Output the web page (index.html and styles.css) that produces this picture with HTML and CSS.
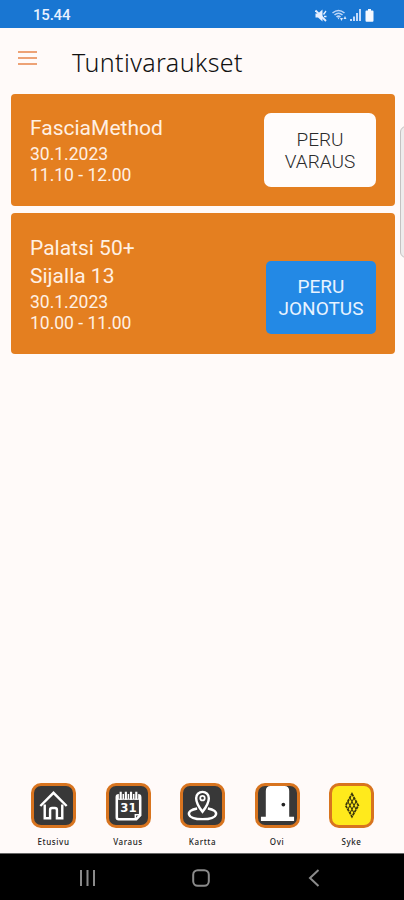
FILE: index.html
```html
<!DOCTYPE html>
<html lang="fi">
<head>
  <meta charset="UTF-8">
  <meta name="viewport" content="width=device-width, initial-scale=1">
  <title>Tuntivaraukset</title>
  <link rel="stylesheet" href="styles.css">
</head>
<body>
  <div class="status-bar">
    <span class="clock">15.44</span>
    <div class="status-icons">
      <svg width="12" height="13" viewBox="0 0 12 13">
        <path d="M.5 4.500H3L7.500.500v12L3 8.500H.5z" fill="#e6efff"/>
        <path d="M8.500 5.500L11 2M9 7.500h2.500" stroke="#e6efff" stroke-width="1.300"/>
        <path d="M.5 1.500l10.500 10.500" stroke="#e6efff" stroke-width="1.800"/>
      </svg>
      <svg class="wifi" width="15" height="12" viewBox="0 0 15 12">
        <g fill="none" stroke="#bcd6f8" stroke-width="1.600">
          <path d="M.5 4Q6.500-1 12.500 4"/>
          <path d="M2.500 6Q6.500 2.500 10.500 6"/>
          <path d="M4.500 8Q6.500 6.200 8.500 8"/>
        </g>
        <path d="M5.500 8.500h2L6.500 10.500zM8 9h3l-1.500 3zM11.500 10L13 7l1.500 3z" fill="#d5e5fb"/>
      </svg>
      <svg class="signal" width="12" height="12" viewBox="0 0 12 12" fill="#c3dafa">
        <path d="M0 10h2v2H0zM3 7.500h2V12H3zM6 4h2v8H6zM9 0h2v12H9z"/>
      </svg>
      <svg class="battery" width="9" height="13" viewBox="0 0 9 13">
        <path d="M3 0h3v1.500h1.500Q8.500 1.500 8.500 2.500v9Q8.500 12.700 7.500 12.700h-6Q.5 12.700.5 11.500v-9Q.5 1.500 1.500 1.500H3z" fill="#f4f8ff"/>
      </svg>
    </div>
  </div>

  <header class="header">
    <button class="menu-button" aria-label="Valikko">
      <span></span>
      <span></span>
      <span></span>
    </button>
    <h1>Tuntivaraukset</h1>
  </header>

  <main class="bookings">
    <div class="card">
      <div class="info">
        <h2>FasciaMethod</h2>
        <p>30.1.2023</p>
        <p>11.10 - 12.00</p>
      </div>
      <button class="cancel-button">PERU<br>VARAUS</button>
    </div>
    <div class="card card-queue">
      <div class="info">
        <h2>Palatsi 50+</h2>
        <h2>Sijalla 13</h2>
        <p>30.1.2023</p>
        <p>10.00 - 11.00</p>
      </div>
      <button class="cancel-button queue-button">PERU<br>JONOTUS</button>
    </div>
  </main>

  <nav class="tabs">
    <a class="tab">
      <span class="tab-icon">
        <svg viewBox="0 0 40 40" fill="none" stroke="#fff" stroke-width="2.500">
          <path d="M6.500 20.500L20 7l13.500 13.500"/>
          <path d="M11 19v14h5.500v-8.500q0-2 2-2h3q2 0 2 2V33H29V19"/>
        </svg>
      </span>
      <span class="tab-label">Etusivu</span>
    </a>
    <a class="tab">
      <span class="tab-icon">
        <svg viewBox="0 0 40 40">
          <path d="M10 9.500h20q2 0 2 2V30l-4 4H10q-2 0-2-2V11.500q0-2 2-2z" fill="none" stroke="#fff" stroke-width="2.600"/>
          <path d="M27 34v-4.500h5" fill="none" stroke="#fff" stroke-width="1.500"/>
          <path d="M8 9.500h24v4.500H8z" fill="#fff"/>
          <path d="M12 6v7M17.300 6v7M22.600 6v7M28 6v7" stroke="#383838" stroke-width="3.800"/>
          <path d="M12 6v8M17.300 6v8M22.600 6v8M28 6v8" stroke="#fff" stroke-width="2.200"/>
          <text class="calendar-day" x="20" y="27" text-anchor="middle">31</text>
        </svg>
      </span>
      <span class="tab-label">Varaus</span>
    </a>
    <a class="tab">
      <span class="tab-icon">
        <svg viewBox="0 0 40 40" fill="none" stroke="#fff" stroke-width="2.500">
          <path d="M20 26.500Q13.500 18 13.500 12.500a6.500 6.500 0 0 1 13 0Q26.500 18 20 26.500z"/>
          <circle cx="20" cy="12.500" r="2.300" stroke-width="1.800"/>
          <path d="M14.500 23C2 25 3 34 20 34s18-9 5.500-11"/>
        </svg>
      </span>
      <span class="tab-label">Kartta</span>
    </a>
    <a class="tab">
      <span class="tab-icon">
        <svg viewBox="0 0 40 40">
          <path d="M8 31.500V5q0-5 5-5h14q5 0 5 5v26.500h5V36H3v-4.500z" fill="#fff"/>
          <circle cx="26" cy="19" r="1.900" fill="#222"/>
        </svg>
      </span>
      <span class="tab-label">Ovi</span>
    </a>
    <a class="tab">
      <span class="tab-icon tab-icon-yellow">
        <svg viewBox="0 0 40 40" fill="none" stroke="#3c380b">
          <path d="M20.500 8L27 20l-6.500 11.500L14 20z" stroke-width="1.800" stroke-dasharray="3 .7"/>
          <path d="M18.300 12l6.500 12M16.200 16l6.500 12M22.700 12l-6.500 12M24.800 16l-6.500 12" stroke-width="1.100"/>
        </svg>
      </span>
      <span class="tab-label">Syke</span>
    </a>
  </nav>

  <div class="system-nav">
    <svg width="18" height="18" viewBox="0 0 18 18" stroke="#8b8b8b" stroke-width="2">
      <path d="M2 1v16M8.500 1v16M15 1v16"/>
    </svg>
    <svg width="18" height="18" viewBox="0 0 18 18" fill="none" stroke="#8b8b8b" stroke-width="2">
      <rect x="1.200" y="1.200" width="15.600" height="15.600" rx="4.500"/>
    </svg>
    <svg width="18" height="18" viewBox="0 0 18 18" fill="none" stroke="#8b8b8b" stroke-width="2">
      <path d="M13.500 1L5 9l8.500 8"/>
    </svg>
  </div>

  <div class="edge-handle"></div>
</body>
</html>
```
FILE: styles.css
```css
* {
  box-sizing: border-box;
}

body {
  position: relative;
  display: flex;
  flex-direction: column;
  height: 900px;
  margin: 0;
  overflow: hidden;
  font-family: Roboto, sans-serif;
  background: #fffaf9;
}

h1, h2, p {
  margin: 0;
  font-weight: 400;
}

button {
  border: none;
  font-family: inherit;
  cursor: pointer;
}

.status-bar {
  display: flex;
  align-items: center;
  justify-content: space-between;
  height: 28px;
  padding: 2px 30px 0 33px;
  background: #1976d2;
}

.clock {
  color: #e8f1ff;
  font-size: 15px;
  font-weight: 500;
  letter-spacing: -0.2px;
}

.status-icons {
  display: flex;
  align-items: center;
}

.wifi {
  margin-left: 5px;
}

.signal {
  margin-left: 3px;
}

.battery {
  margin-left: 3px;
}

.header {
  display: flex;
  align-items: center;
  height: 66px;
  padding: 2px 18px 0;
}

.menu-button {
  display: flex;
  flex-direction: column;
  gap: 4px;
  width: 19px;
  margin: -8px 35px 0 0;
  padding: 0;
  background: none;
}

.menu-button span {
  height: 2px;
  background: #eda276;
}

.header h1 {
  color: #111;
  font-family: "Noto Sans", sans-serif;
  font-size: 25px;
  font-weight: 300;
  line-height: 34px;
  letter-spacing: 0.4px;
}

.bookings {
  flex: 1;
  display: flex;
  flex-direction: column;
  gap: 7px;
  padding: 0 9px 0 11px;
}

.card {
  display: flex;
  align-items: center;
  justify-content: space-between;
  height: 112px;
  padding: 0 19px;
  border-radius: 4px;
  background: #e47f20;
}

.card-queue {
  align-items: flex-end;
  height: 141px;
  padding-bottom: 20px;
}

.info {
  color: #fff0e3;
}

.info h2 {
  font-size: 21px;
  line-height: 28px;
}

.info p {
  font-size: 17.5px;
  line-height: 21px;
}

.info h2 + p {
  margin-top: 2px;
}

.cancel-button {
  width: 112px;
  height: 74px;
  padding: 1px 0 0;
  border-radius: 7px;
  background: #fffcfb;
  color: #2b2b2b;
  font-size: 19px;
  font-weight: 300;
  line-height: 22px;
}

.queue-button {
  width: 110px;
  height: 73px;
  border-radius: 5px;
  background: #2389e5;
  color: #e8f3ff;
  font-weight: 400;
}

.tabs {
  display: flex;
  justify-content: space-between;
  height: 70px;
  padding: 0 30px 0 31px;
}

.tab {
  display: flex;
  flex-direction: column;
  align-items: center;
  width: 45px;
}

.tab-icon {
  width: 45px;
  height: 45px;
  border: 3px solid #d8741f;
  border-radius: 10px;
  background: #383838;
  overflow: hidden;
}

.tab-icon svg {
  display: block;
  width: 100%;
  height: 100%;
}

.tab-icon-yellow {
  background: #ffea1c;
}

.calendar-day {
  fill: #fff;
  font-family: "DejaVu Sans", sans-serif;
  font-size: 12px;
  font-weight: 700;
}

.tab-label {
  margin-top: 8px;
  color: #222;
  font-family: "Noto Sans", sans-serif;
  font-size: 8px;
  font-weight: 500;
  line-height: 12px;
  letter-spacing: 0.6px;
}

.system-nav {
  display: flex;
  align-items: center;
  justify-content: space-between;
  height: 47px;
  padding: 2px 81px 0 79px;
  border-top: 1px solid #666;
  background: #000;
}

/* edge panel grip, runs off the right side of the screen */
.edge-handle {
  position: absolute;
  top: 126px;
  right: -8px;
  width: 12px;
  height: 132px;
  border: 1px solid #c4c2c2;
  border-radius: 6px;
  background: #eeecec;
}
```
